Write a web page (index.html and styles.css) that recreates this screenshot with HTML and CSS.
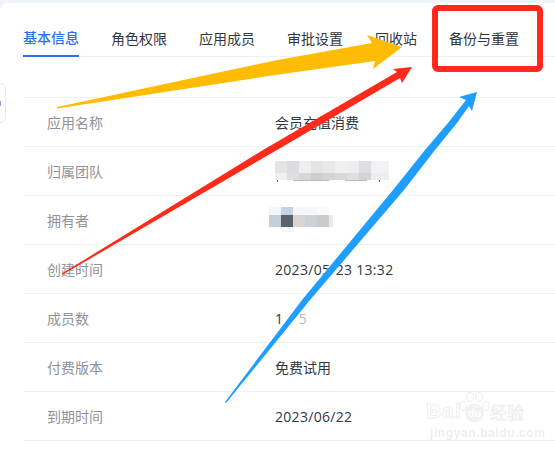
FILE: index.html
```html
<!DOCTYPE html>
<html lang="zh-CN">
<head>
<meta charset="utf-8">
<title>基本信息</title>
<link rel="stylesheet" href="styles.css">
</head>
<body>
<main class="card">
  <nav class="tabs">
    <a class="tab tab-active">基本信息</a>
    <a class="tab">角色权限</a>
    <a class="tab">应用成员</a>
    <a class="tab">审批设置</a>
    <a class="tab">回收站</a>
    <a class="tab">备份与重置</a>
  </nav>
  <section class="info">
    <div class="row"><span class="label">应用名称</span><span class="value">会员充值消费</span></div>
    <div class="row"><span class="label">归属团队</span>
      <svg class="mosaic" width="114" height="21" viewBox="0 0 114 21">
        <rect x="0" y="0" width="12" height="12" fill="#e4e4e6"/><rect x="12" y="0" width="12" height="12" fill="#dcdcde"/><rect x="24" y="0" width="12" height="12" fill="#eceef0"/><rect x="36" y="0" width="12" height="12" fill="#e6e5e4"/><rect x="48" y="0" width="12" height="12" fill="#e9e9e8"/><rect x="60" y="0" width="12" height="12" fill="#eef0f2"/><rect x="72" y="0" width="12" height="12" fill="#eceef0"/><rect x="84" y="0" width="12" height="12" fill="#e0dde0"/><rect x="96" y="0" width="18" height="12" fill="#f1f2f4"/>
        <rect x="0" y="12" width="12" height="7" fill="#f0f0f0"/><rect x="12" y="12" width="12" height="7" fill="#dfdedf"/><rect x="24" y="12" width="12" height="7" fill="#d8d6d8"/><rect x="36" y="12" width="12" height="7" fill="#cfcdcd"/><rect x="48" y="12" width="12" height="7" fill="#d5d3d3"/><rect x="60" y="12" width="12" height="7" fill="#d9d9d9"/><rect x="72" y="12" width="12" height="7" fill="#e0dfe0"/><rect x="84" y="12" width="12" height="7" fill="#d6d3d6"/><rect x="96" y="12" width="18" height="7" fill="#eeeef0"/>
        <rect x="2" y="19" width="1" height="2" fill="#55585e"/><rect x="18" y="19" width="36" height="1" fill="#b9b9bc"/><rect x="70" y="19" width="22" height="1" fill="#b9b9bc"/><rect x="104" y="19" width="1" height="2" fill="#55585e"/>
      </svg>
    </div>
    <div class="row"><span class="label">拥有者</span>
      <svg class="mosaic mosaic-owner" width="65" height="26" viewBox="0 0 65 26">
        <rect x="0" y="0" width="12" height="8" fill="#f3f6fb"/><rect x="12" y="0" width="12" height="8" fill="#c3d3e8"/><rect x="24" y="0" width="12" height="8" fill="#f6f6f7"/><rect x="36" y="0" width="12" height="8" fill="#f5f6f7"/><rect x="48" y="0" width="12" height="8" fill="#fafafa"/>
        <rect x="0" y="8" width="12" height="12" fill="#c3cfd8"/><rect x="12" y="8" width="12" height="12" fill="#5c626b"/><rect x="24" y="8" width="12" height="12" fill="#d8d5d2"/><rect x="36" y="8" width="12" height="12" fill="#cdd2d6"/><rect x="48" y="8" width="12" height="12" fill="#cdcbca"/><rect x="60" y="8" width="4" height="12" fill="#e6e9f0"/>
        <rect x="12" y="20" width="12" height="5" fill="#f5f5f6"/>
      </svg>
    </div>
    <div class="row"><span class="label">创建时间</span><span class="value num">2023/05/23 13:32</span></div>
    <div class="row"><span class="label">成员数</span><span class="value num">1<span class="count-total">/ 5</span></span></div>
    <div class="row"><span class="label">付费版本</span><span class="value">免费试用</span></div>
    <div class="row"><span class="label">到期时间</span><span class="value num">2023/06/22</span></div>
  </section>
</main>

<div class="side-handle"></div>

<svg class="annotations" width="555" height="451" viewBox="0 0 555 451">
  <polygon fill="#ffbc00" points="57,107 275,60.5 372,43 367,35 402,47 373,69 375,61 275,75 57,108.5"/>
  <polygon fill="#ff2a1a" points="62,273.5 263,150 397,72 393,69 412,67 402,83 400,78 277,150 62,275"/>
  <polygon fill="#1e9eff" points="225,402 302,300 393,190 425,150 448,123 466,100 459,97 477,92 472,111 469,106 457,123 435,150 404,190 310,300 226,403"/>
  <rect x="435" y="8" width="105" height="61" rx="3" fill="none" stroke="#ff2a1a" stroke-width="6"/>
</svg>

<div class="watermark">
  <div class="wm-top">
    <span class="wm-bai">Bai</span>
    <svg class="wm-paw" width="31" height="31" viewBox="0 0 31 31">
      <g fill="#fff" stroke="#ececec">
        <ellipse cx="4" cy="14" rx="3" ry="4.5"/>
        <ellipse cx="11" cy="5" rx="3.5" ry="4.5"/>
        <ellipse cx="20" cy="5" rx="3.5" ry="4.5"/>
        <ellipse cx="27" cy="14" rx="3" ry="4.5"/>
      </g>
      <circle cx="15.5" cy="21" r="9.5" fill="#f2f2f2"/>
      <text x="15.5" y="25" text-anchor="middle" class="wm-du">du</text>
    </svg>
    <span class="wm-cn">经验</span>
  </div>
  <div class="wm-url">jingyan.baidu.com</div>
</div>
</body>
</html>
```

FILE: styles.css
```css
* {
  box-sizing: border-box;
}

html,
body {
  margin: 0;
  height: 451px;
  overflow: hidden;
}

body {
  position: relative;
  padding-top: 3px;
  background: #f0f4f9;
  font-family: "Noto Sans CJK SC", "Noto Sans", sans-serif;
  font-size: 14px;
  color: #2b2f36;
}

.card {
  height: 448px;
  padding-left: 23px;
  background: #fff;
  border-top-left-radius: 8px;
}

.tabs {
  display: flex;
  gap: 32px;
  height: 54px;
  border-bottom: 1px solid #eff0f2;
}

.tab {
  position: relative;
  display: flex;
  align-items: center;
  height: 54px;
  padding-top: 16px;
  line-height: 20px;
  color: #33373e;
}

.tab-active {
  color: #2b6ff5;
  font-weight: 500;
  border-bottom: 2px solid #2b6ff5;
}

.info {
  margin-top: 40px;
  border-top: 1px solid #eff0f2;
}

.row {
  display: flex;
  align-items: center;
  height: 49px;
  border-bottom: 1px solid #eff0f2;
}

.label {
  width: 252px;
  padding-left: 24px;
  color: #8f9299;
}

.value {
  color: #33373e;
}

.num {
  font-family: "Open Sans", sans-serif;
  letter-spacing: 0.3px;
}

.count-total {
  margin-left: 5px;
  color: #b6b8bc;
  word-spacing: 1px;
}

.mosaic {
  display: block;
}

.mosaic-owner {
  margin-left: -6px;
}

.side-handle {
  position: absolute;
  left: -6px;
  top: 83px;
  width: 12px;
  height: 40px;
  background: #fff;
  border: 1px solid #e8e9ec;
  border-radius: 6px;
}

.side-handle::after {
  content: "";
  position: absolute;
  left: 5px;
  top: 17px;
  width: 1px;
  height: 5px;
  background: #8fa6c8;
}

.annotations {
  position: absolute;
  left: 0;
  top: 0;
}

.watermark {
  position: absolute;
  left: 426px;
  top: 392px;
  width: 100px;
  color: #ececec;
  filter: blur(0.4px);
}

.wm-top {
  display: flex;
  align-items: flex-end;
  height: 31px;
  white-space: nowrap;
}

.wm-bai {
  flex: none;
  width: 33px;
  font-family: "Liberation Sans", sans-serif;
  font-size: 21px;
  line-height: 24px;
  font-weight: 700;
  letter-spacing: 1px;
  color: #fff;
  -webkit-text-stroke: 0.6px #e6e6e6;
}

.wm-paw {
  display: block;
  flex: none;
}

.wm-du {
  font-family: "Liberation Sans", sans-serif;
  font-size: 11px;
  font-weight: 700;
  fill: #fff;
}

.wm-cn {
  flex: none;
  font-size: 17px;
  line-height: 22px;
  color: #fff;
  -webkit-text-stroke: 0.5px #e4e4e4;
}

.wm-url {
  margin-top: 3px;
  padding-left: 4px;
  font-family: "Liberation Sans", sans-serif;
  font-size: 12px;
  line-height: 14px;
  font-weight: 700;
  letter-spacing: 0.6px;
  white-space: nowrap;
  color: #eeeeee;
}
```
